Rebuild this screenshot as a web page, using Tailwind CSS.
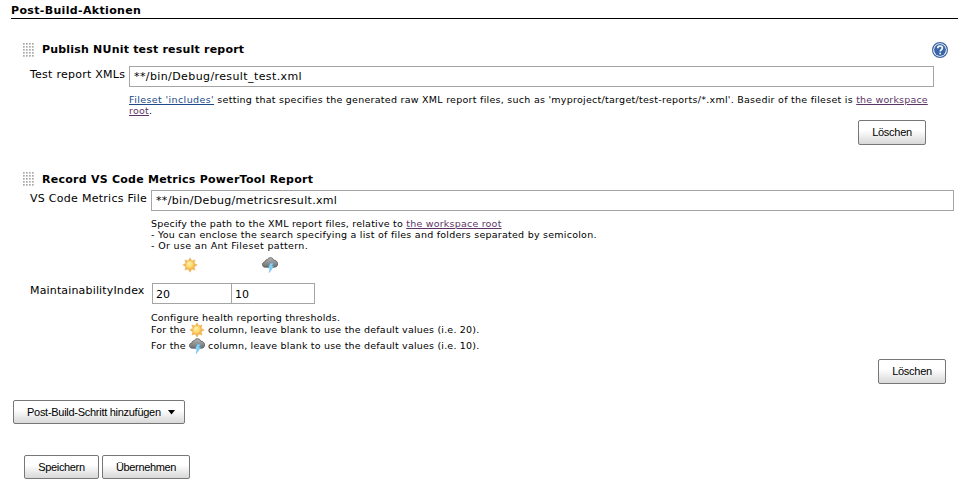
<!DOCTYPE html>
<html lang="de">
<head>
<meta charset="utf-8">
<title>Post-Build-Aktionen</title>
<script src="https://cdn.jsdelivr.net/npm/@tailwindcss/browser@4"></script>
</head>
<body class="h-[489px] w-[971px] overflow-hidden bg-white font-['DejaVu_Sans','Noto_Sans',sans-serif] text-[11px] leading-[14px] text-black">
<svg class="absolute h-0 w-0">
  <defs>
    <linearGradient id="cloudfill" x1="0" y1="0" x2="0" y2="1"><stop offset="0" stop-color="#b4b4b4"/><stop offset="1" stop-color="#707070"/></linearGradient>
    <radialGradient id="sunfill" cx=".4" cy=".35" r=".7"><stop offset="0" stop-color="#fff3ae"/><stop offset=".6" stop-color="#fdd869"/><stop offset="1" stop-color="#f3a83c"/></radialGradient>
    <pattern id="grip" width="3" height="3" patternUnits="userSpaceOnUse"><rect width="1.700" height="1.700" fill="#aaa"/></pattern>
    <symbol id="sun" viewBox="0 0 16 16">
      <path d="M8 .8 9.500 3.400H6.500zM8 15.200 6.500 12.600h3zM.8 8 3.400 6.500v3zM15.200 8l-2.600 1.500v-3zM2.900 2.900l2.900.8-2.100 2.100zM13.100 2.900l-.8 2.900-2.100-2.100zM2.900 13.100l.8-2.900 2.100 2.100zM13.100 13.100l-2.900-.8 2.100-2.100z" fill="#f7b84c" stroke="#e9a34a" stroke-width=".4"/>
      <circle cx="8" cy="8" r="4.400" fill="url(#sunfill)" stroke="#eeb14d" stroke-width=".8"/>
    </symbol>
    <symbol id="storm" viewBox="0 0 16 16">
      <path d="M3.200 10.200C1.400 10.200.4 9 .4 7.600S1.500 5 3 5C3 3.400 4 2.500 5.400 2.600 6 1.300 7 .7 8.500 .7c1.700 0 2.900 1 3.200 2.500C14 3.200 15.600 4.700 15.600 6.900c0 2-1.300 3.300-3.100 3.300z" fill="url(#cloudfill)" stroke="#555" stroke-width=".8"/>
      <path d="M8.300 6.200h3.200L9.800 9.200h2L7.200 15.500l1-4.400H6.200z" fill="#8bd3f7" stroke="#55aee0" stroke-width=".5"/>
    </symbol>
  </defs>
</svg>

<h2 class="ml-[11px] h-[19px] w-[947px] border-b border-black pt-[4px] font-bold tracking-[.34px]">Post-Build-Aktionen</h2>

<section class="flow-root">
  <div class="mt-[22px] ml-[23px] flex h-[17px] w-[925px] items-center">
    <svg class="h-[14px] w-[11px]" viewBox="0 0 11 14"><rect width="11" height="14" fill="url(#grip)"/></svg>
    <h3 class="ml-[8px] font-bold tracking-[.2px]">Publish NUnit test result report</h3>
    <svg class="ml-auto h-4 w-4" viewBox="0 0 16 16"><circle cx="8" cy="8" r="7.400" fill="#fff" stroke="#3d66a5" stroke-width="1.200"/><circle cx="8" cy="8" r="5.900" fill="#3a66a7"/><path d="M5.700 6.300C5.700 4.700 6.700 4 8.100 4s2.300.8 2.300 2c0 1.800-2.200 1.700-2.200 3.500M8.200 10.700v1.500" fill="none" stroke="#fff" stroke-width="1.600"/></svg>
  </div>
  <div class="mt-[8px] ml-[30px] flex">
    <label class="w-[99px] pt-[2px] tracking-[.25px]">Test report XMLs</label>
    <div>
      <div class="flex h-[21px] w-[805px] items-center border border-[#a5a5a5] px-[4px] pt-px tracking-[.4px]">**/bin/Debug/result_test.xml</div>
      <div class="mt-[7px] text-[9.500px] leading-[11px] tracking-[.263px] whitespace-nowrap"><a class="tracking-[.39px] text-[#204a87] underline">Fileset 'includes'</a> setting that specifies the generated raw XML report files, such as 'myproject/target/test-reports/*.xml'. Basedir of the fileset is <a class="tracking-[.16px] text-[#5c3566] underline">the workspace</a><br><a class="text-[#5c3566] underline">root</a>.</div>
    </div>
  </div>
  <div class="mt-[4px] ml-[858px] flex h-[25px] w-[68px] items-center justify-center rounded-[2px] border border-[#777] bg-linear-to-b from-white from-40% to-[#d8d8d8] pb-px font-['Liberation_Sans',sans-serif] tracking-[-.27px]">Löschen</div>
</section>

<section class="flow-root">
  <div class="mt-[26px] ml-[23px] flex h-[16px] items-center">
    <svg class="h-[14px] w-[11px]" viewBox="0 0 11 14"><rect width="11" height="14" fill="url(#grip)"/></svg>
    <h3 class="ml-[8px] pt-[2px] font-bold tracking-[.25px]">Record VS Code Metrics PowerTool Report</h3>
  </div>
  <div class="mt-[3px] ml-[30px] flex h-[62px]">
    <label class="w-[121px] pt-[2px] tracking-[.28px]">VS Code Metrics File</label>
    <div>
      <div class="flex h-[21px] w-[803px] items-center border border-[#a5a5a5] px-[4px] pt-px tracking-[.33px]">**/bin/Debug/metricsresult.xml</div>
      <div class="mt-[7px] text-[9.500px] leading-[11px] tracking-[.245px] whitespace-nowrap"><div class="tracking-[.21px]">Specify the path to the XML report files, relative to <a class="text-[#5c3566] underline">the workspace root</a></div><div>- You can enclose the search specifying a list of files and folders separated by semicolon.</div><div class="tracking-[.34px]">- Or use an Ant Fileset pattern.</div></div>
    </div>
  </div>
  <div class="mt-[5px] ml-[182px] flex h-4 gap-[64px]">
    <svg class="h-4 w-4"><use href="#sun"/></svg>
    <svg class="h-4 w-4"><use href="#storm"/></svg>
  </div>
  <div class="mt-[10px] ml-[30px] flex">
    <label class="w-[122px] pt-[1px] tracking-[.16px]">MaintainabilityIndex</label>
    <div class="flex h-[21px] w-[163px] border border-[#a5a5a5] leading-[21px]"><div class="w-[78px] pl-[3px]">20</div><div class="flex-1 border-l border-[#a5a5a5] pl-[3px]">10</div></div>
  </div>
  <div class="mt-[8px] ml-[151px] text-[9.500px] leading-[11px] tracking-[.2px] whitespace-nowrap">
    <div>Configure health reporting thresholds.</div>
    <div class="flex h-[14px] items-center gap-[3px]"><span class="w-[35px] pb-[2px]">For the</span><svg class="h-4 w-4"><use href="#sun"/></svg><span class="pb-[2px]">column, leave blank to use the default values (i.e. 20).</span></div>
    <div class="mt-[2px] flex h-[14px] items-center gap-[3px]"><span class="w-[35px] pb-[2px]">For the</span><svg class="h-4 w-4"><use href="#storm"/></svg><span class="pb-[2px]">column, leave blank to use the default values (i.e. 10).</span></div>
  </div>
  <div class="mt-[6px] ml-[878px] flex h-[25px] w-[68px] items-center justify-center rounded-[2px] border border-[#777] bg-linear-to-b from-white from-40% to-[#d8d8d8] pb-px font-['Liberation_Sans',sans-serif] tracking-[-.27px]">Löschen</div>
</section>

<div class="mt-[16px] ml-[13px] flex h-[24px] w-[172px] items-center rounded-[2px] border border-[#777] bg-linear-to-b from-white from-40% to-[#d8d8d8] pl-[13px] font-['Liberation_Sans',sans-serif] tracking-[-.28px]"><span>Post-Build-Schritt hinzufügen</span><svg class="ml-[7px] h-[5px] w-[7px]" viewBox="0 0 7 5"><path d="M0 0h7L3.500 4.500z"/></svg></div>
<div class="mt-[31px] ml-[24px] flex gap-[3px] font-['Liberation_Sans',sans-serif] tracking-[-.35px]">
  <div class="flex h-[24px] w-[75px] items-center justify-center rounded-[2px] border border-[#777] bg-linear-to-b from-white from-40% to-[#d8d8d8]">Speichern</div>
  <div class="flex h-[24px] w-[88px] items-center justify-center rounded-[2px] border border-[#777] bg-linear-to-b from-white from-40% to-[#d8d8d8]">Übernehmen</div>
</div>
</body>
</html>
